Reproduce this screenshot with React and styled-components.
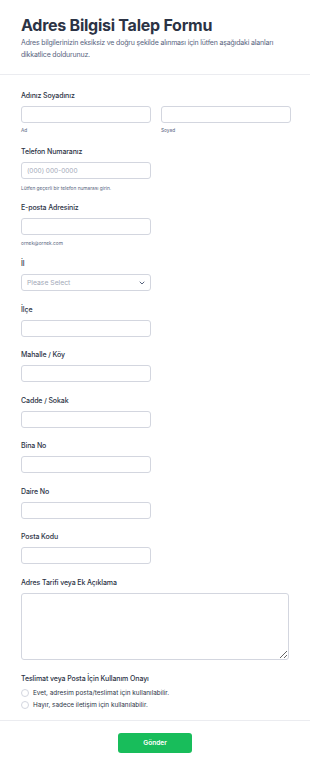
import React from "react";
import styled, { createGlobalStyle } from "styled-components";

const COLORS = {
  text: "#2c3345",
  muted: "#57647e",
  border: "#d3d6df",
  divider: "#ebecf0",
  placeholder: "#a3a9b8",
  green: "#18bd5b",
};

const GlobalStyle = createGlobalStyle`
  html, body {
    margin: 0;
    padding: 0;
    background: #fff;
  }
  body {
    font-family: Inter, "Noto Sans", sans-serif;
    color: ${COLORS.text};
  }
  * {
    box-sizing: border-box;
  }
`;

const Page = styled.div`
  width: 310px;
  min-height: 769px;
  background: #fff;
`;

const Header = styled.header`
  padding: 15px 21px 14px;
  border-bottom: 1px solid ${COLORS.divider};
`;

const Title = styled.h1`
  margin: 0;
  font-size: 16px;
  line-height: 21px;
  font-weight: 700;
  letter-spacing: -0.25px;
  color: ${COLORS.text};
`;

const Subtitle = styled.p`
  margin: 1px 0 0;
  font-size: 7px;
  line-height: 11.5px;
  letter-spacing: -0.18px;
  color: ${COLORS.muted};
  max-width: 270px;
`;

const Body = styled.div`
  padding: 16px 21px 10px;
  border-bottom: 1px solid ${COLORS.divider};
`;

const Field = styled.div`
  padding-bottom: ${(p) => p.$after ?? 13.5}px;
`;

const Label = styled.label`
  display: block;
  font-size: 7px;
  line-height: 10px;
  font-weight: 500;
  letter-spacing: -0.1px;
  color: ${COLORS.text};
  margin-bottom: 5px;
`;

const Input = styled.input`
  display: block;
  width: 130px;
  height: 17px;
  border: 1px solid ${COLORS.border};
  border-radius: 3px;
  background: #fff;
  padding: 0 5px;
  font-family: inherit;
  font-size: 6.5px;
  color: ${COLORS.text};
  outline: none;

  &::placeholder {
    color: ${COLORS.placeholder};
  }
`;

const Row = styled.div`
  display: flex;
  gap: 10px;
`;

const Col = styled.div`
  display: flex;
  flex-direction: column;
`;

const Hint = styled.span`
  display: block;
  font-size: 4.8px;
  line-height: 8px;
  color: ${COLORS.muted};
  margin-top: ${(p) => p.$top ?? 4}px;
`;

const SelectBox = styled.div`
  width: 130px;
  height: 17px;
  border: 1px solid ${COLORS.border};
  border-radius: 3px;
  display: flex;
  align-items: center;
  justify-content: space-between;
  padding: 0 5px;
  font-size: 6.8px;
  color: ${COLORS.placeholder};
`;

const TextArea = styled.textarea`
  display: block;
  width: 100%;
  height: 67px;
  border: 1px solid ${COLORS.border};
  border-radius: 3px;
  resize: vertical;
  font-family: inherit;
  outline: none;
`;

const RadioList = styled.div`
  display: flex;
  flex-direction: column;
  gap: 4px;
`;

const RadioRow = styled.label`
  display: flex;
  align-items: center;
  gap: 4px;
  font-size: 6.4px;
  line-height: 8.5px;
  color: ${COLORS.text};
`;

const RadioDot = styled.span`
  width: 8px;
  height: 8px;
  border-radius: 50%;
  border: 1px solid ${COLORS.border};
  background: #fff;
  flex-shrink: 0;
`;

const Footer = styled.div`
  display: flex;
  justify-content: center;
  padding: 12px 0;
`;

const SubmitButton = styled.button`
  width: 74px;
  height: 20px;
  border: none;
  border-radius: 3px;
  background: ${COLORS.green};
  color: #fff;
  font-family: inherit;
  font-size: 6.6px;
  font-weight: 600;
  cursor: pointer;
`;

const Chevron = () => (
  <svg width="6" height="4" viewBox="0 0 6 4" fill="none">
    <path d="M1 1l2 2 2-2" stroke="#57647e" strokeWidth="1" strokeLinecap="round" strokeLinejoin="round" />
  </svg>
);

const simpleFields = ["İlçe", "Mahalle / Köy", "Cadde / Sokak", "Bina No", "Daire No", "Posta Kodu"];

export default function App() {
  return (
    <Page>
      <GlobalStyle />
      <Header>
        <Title>Adres Bilgisi Talep Formu</Title>
        <Subtitle>
          Adres bilgilerinizin eksiksiz ve doğru şekilde alınması için lütfen aşağıdaki alanları
          dikkatlice doldurunuz.
        </Subtitle>
      </Header>

      <Body>
        <Field $after={13}>
          <Label>Adınız Soyadınız</Label>
          <Row>
            <Col>
              <Input />
              <Hint $top={3}>Ad</Hint>
            </Col>
            <Col>
              <Input />
              <Hint $top={3}>Soyad</Hint>
            </Col>
          </Row>
        </Field>

        <Field $after={11}>
          <Label>Telefon Numaranız</Label>
          <Input placeholder="(000) 000-0000" />
          <Hint $top={5}>Lütfen geçerli bir telefon numarası girin.</Hint>
        </Field>

        <Field $after={12}>
          <Label>E-posta Adresiniz</Label>
          <Input />
          <Hint $top={4}>ornek@ornek.com</Hint>
        </Field>

        <Field>
          <Label>İl</Label>
          <SelectBox>
            <span>Please Select</span>
            <Chevron />
          </SelectBox>
        </Field>

        {simpleFields.map((name) => (
          <Field key={name}>
            <Label>{name}</Label>
            <Input />
          </Field>
        ))}

        <Field $after={14}>
          <Label>Adres Tarifi veya Ek Açıklama</Label>
          <TextArea />
        </Field>

        <Field $after={0}>
          <Label>Teslimat veya Posta İçin Kullanım Onayı</Label>
          <RadioList>
            <RadioRow>
              <RadioDot />
              Evet, adresim posta/teslimat için kullanılabilir.
            </RadioRow>
            <RadioRow>
              <RadioDot />
              Hayır, sadece iletişim için kullanılabilir.
            </RadioRow>
          </RadioList>
        </Field>
      </Body>

      <Footer>
        <SubmitButton type="button">Gönder</SubmitButton>
      </Footer>
    </Page>
  );
}
